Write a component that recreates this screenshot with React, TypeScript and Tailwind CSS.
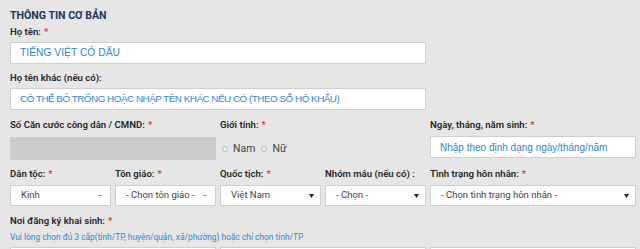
import React from "react";

const sans = { fontFamily: 'Roboto, "Liberation Sans", Arial, sans-serif' };
const arial = { fontFamily: '"Liberation Sans", Arial, sans-serif' };

function Req() {
  return <span className="text-[#e53935] ml-[3px]">*</span>;
}

function Label({ children, req }: { children: React.ReactNode; req?: boolean }) {
  return (
    <div className="text-[9.6px] leading-[14px] font-semibold text-[#262626] h-[14px] whitespace-nowrap">
      {children}
      {req && <Req />}
    </div>
  );
}

function TextBox({ value, className = "" }: { value: string; className?: string }) {
  return (
    <div
      className={`h-[22px] bg-white border border-[#cfcfcf] flex items-center pl-[9px] text-[#2f86d8] whitespace-nowrap overflow-hidden ${className}`}
      style={arial}
    >
      {value}
    </div>
  );
}

function Select({ value, dim }: { value: string; dim?: boolean }) {
  return (
    <div className="h-[21px] bg-white border border-[#cfcfcf] flex items-center justify-between pl-[10px] pr-[6px] text-[9.5px] text-[#444] whitespace-nowrap">
      <span>{value}</span>
      {dim ? (
        <span className="w-[4px] h-[1px] bg-[#999] mr-[2px]" />
      ) : (
        <svg width="5" height="4" viewBox="0 0 5 4">
          <path d="M0 0H5L2.5 4Z" fill="#222" />
        </svg>
      )}
    </div>
  );
}

function Radio({ label }: { label: string }) {
  return (
    <label className="flex items-center gap-[5px] text-[10.5px] text-[#444]">
      <span className="w-[6px] h-[6px] rounded-full border border-[#b5b5b5] bg-[#f2f2f2]" />
      {label}
    </label>
  );
}

export default function App() {
  return (
    <div className="w-[640px] h-[249px] bg-[#e6e6e6] overflow-hidden pl-[10px] pr-[4px]" style={sans}>
      <div className="pt-[10px] h-[21px] text-[10.6px] leading-[12px] font-bold text-[#1d3557] uppercase whitespace-nowrap">
        Thông tin cơ bản
      </div>

      <div className="mt-[4px]"><Label req>Họ tên:</Label></div>
      <div className="grid grid-cols-6 gap-x-[4px] mt-[3px]">
        <TextBox className="col-span-4 text-[10.3px]" value="TIẾNG VIỆT CÓ DẤU" />
      </div>

      <div className="mt-[7px]"><Label>Họ tên khác (nếu có):</Label></div>
      <div className="grid grid-cols-6 gap-x-[4px] mt-[3px]">
        <TextBox
          className="col-span-4 text-[9.9px] tracking-[-0.5px]"
          value="CÓ THỂ BỎ TRỐNG HOẶC NHẬP TÊN KHÁC NẾU CÓ (THEO SỔ HỘ KHẨU)"
        />
      </div>

      <div className="grid grid-cols-6 gap-x-[4px] mt-[8px]">
        <div className="col-span-2">
          <Label req>Số Căn cước công dân / CMND:</Label>
          <div className="mt-[5px] h-[23px] bg-[#cccccc]" />
        </div>
        <div className="col-span-2">
          <Label req>Giới tính:</Label>
          <div className="mt-[5px] h-[23px] flex items-center gap-[6px] pl-[2px]">
            <Radio label="Nam" />
            <Radio label="Nữ" />
          </div>
        </div>
        <div className="col-span-2">
          <Label req>Ngày, tháng, năm sinh:</Label>
          <TextBox className="mt-[4px] text-[10px]" value="Nhập theo định dạng ngày/tháng/năm" />
        </div>
      </div>

      <div className="grid grid-cols-6 gap-x-[4px] mt-[7px]">
        <div>
          <Label req>Dân tộc:</Label>
          <div className="mt-[4px]"><Select value="Kinh" dim /></div>
        </div>
        <div>
          <Label req>Tôn giáo:</Label>
          <div className="mt-[4px]"><Select value="- Chọn tôn giáo -" dim /></div>
        </div>
        <div>
          <Label req>Quốc tịch:</Label>
          <div className="mt-[4px]"><Select value="Việt Nam" /></div>
        </div>
        <div>
          <Label>Nhóm máu (nếu có) :</Label>
          <div className="mt-[4px]"><Select value="- Chọn -" /></div>
        </div>
        <div className="col-span-2">
          <Label req>Tình trạng hôn nhân:</Label>
          <div className="mt-[4px]"><Select value="- Chọn tình trạng hôn nhân -" /></div>
        </div>
      </div>

      <div className="mt-[8px]"><Label req>Nơi đăng ký khai sinh:</Label></div>
      <div className="mt-[3px] h-[12px] text-[8.4px] leading-[12px] text-[#2f86d8] whitespace-nowrap">
        Vui lòng chọn đủ 3 cấp(tỉnh/TP, huyện/quận, xã/phường) hoặc chỉ chọn tỉnh/TP
      </div>
      <div className="grid grid-cols-6 gap-x-[4px] mt-[4px]">
        <div className="col-span-2 h-[22px] bg-white border border-[#cfcfcf] relative">
          <span className="absolute left-[27px] top-[1px] w-[4px] h-[3px] bg-[#e53935]" />
        </div>
        <div className="col-span-2 h-[22px] bg-white border border-[#cfcfcf]" />
        <div className="col-span-2 h-[22px] bg-white border border-[#cfcfcf]" />
      </div>
    </div>
  );
}
